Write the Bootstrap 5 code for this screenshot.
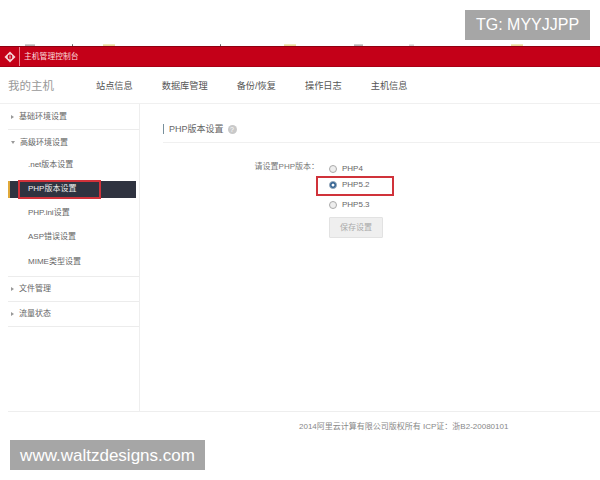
<!DOCTYPE html>
<html lang="zh-CN">
<head>
    <meta charset="UTF-8">
    <meta name="viewport" content="width=device-width, initial-scale=1.0">
    <title>主机管理控制台</title>
    <link href="https://cdn.jsdelivr.net/npm/bootstrap@5.3.0/dist/css/bootstrap.min.css" rel="stylesheet">
    <style>
        html, body { height: 480px; overflow: hidden; }
        body { position: relative; background: #fff; color: #666; font: 8px/1.2 "Liberation Sans", "Noto Sans CJK SC", sans-serif; }
        a { color: inherit; text-decoration: none; }
        .top-gap { height: 42px; }
        .crop-strip { height: 4px; background:
            linear-gradient(#ddd, #aaa) 25px 2px / 10px 2px no-repeat,
            linear-gradient(#999, #555) 72px 2px / 1px 2px no-repeat,
            linear-gradient(#f3eecb, #e8d68c) 103px 2px / 12px 2px no-repeat,
            linear-gradient(#999, #555) 220px 2px / 1px 2px no-repeat,
            linear-gradient(#f3eecb, #e8d68c) 284px 2px / 12px 2px no-repeat,
            linear-gradient(#ddd, #aaa) 354px 2px / 9px 2px no-repeat,
            linear-gradient(#eee, #ccc) 409px 2px / 5px 2px no-repeat,
            linear-gradient(#f3eecb, #e8d68c) 511px 2px / 12px 2px no-repeat;
        }
        .red-bar { height: 21px; background: #c40018; border-top: 1px solid #8f0012; border-bottom: 1px solid #a80016; color: #fbdcdc; }
        .red-logo { width: 20px; border-right: 1px solid #e8808c; }
        .red-title { margin-left: 4px; font-size: 7.8px; }
        .top-nav { height: 37px; padding: 3px 0 0 8px; border-bottom: 1px solid #f0f0f0; }
        .host-title { width: 88px; font-size: 11.5px; color: #999; }
        .nav-gap { gap: 29px; color: #555; }
        .nav-gap a { font-size: 9.2px; }
        .side-col { width: 131px; margin-left: 8px; height: 307px; }
        .main-col { border-left: 1px solid #eee; height: 307px; padding-left: 23px; }
        .side-head { height: 25px; padding-left: 3px; gap: 5px; border-bottom: 1px solid #ececec; }
        .side-head.first { height: 26px; }
        .side-head.open { height: 23px; padding-top: 2px; border-bottom: 0; }
        .arrow-r { width: 0; height: 0; border-left: 3px solid #999; border-top: 2.5px solid transparent; border-bottom: 2.5px solid transparent; }
        .arrow-d { width: 0; height: 0; border-top: 3px solid #999; border-left: 2.5px solid transparent; border-right: 2.5px solid transparent; }
        .side-sub { height: 24.5px; padding-left: 20px; }
        .side-sub.active { height: 17px; margin: 3px 3px 3px 0; background: #2f3340; color: #eee; border-left: 2px solid #e0a93a; padding-left: 18px; position: relative; }
        .side-group { border-bottom: 1px solid #ececec; padding-bottom: 2px; }
        .red-box { position: absolute; border: 2px solid #d0323a; pointer-events: none; }
        .side-mark { left: 8px; top: -1px; width: 83px; height: 19px; }
        .page-head { height: 39px; padding-top: 12px; border-bottom: 1px solid #f0f0f0; font-size: 9px; color: #666; gap: 4px; }
        .head-bar { width: 1px; height: 10px; background: #78909c; margin-right: 1px; }
        .help-dot { width: 9px; height: 9px; border-radius: 50%; background: #c9c9c9; color: #fff; font-size: 7px; line-height: 9px; text-align: center; }
        .form-area { padding-top: 18px; position: relative; }
        .php-label { width: 156px; text-align: right; padding-top: 1px; color: #777; }
        .radio-col { margin-left: 10px; color: #666; }
        .radio-row { gap: 5px; height: 16px; }
        .radio-row.late { margin-top: 4px; }
        .radio-row .form-check-input { width: 8px; height: 8px; margin: 0; border-color: #aaa; background-color: #eee; }
        .radio-row .form-check-input:checked { background-color: #2a5d8f; border-color: #9ab; }
        .radio-mark { left: 153px; top: 33px; width: 78px; height: 20px; }
        .save-btn { width: 54px; height: 21px; margin-top: 4px; padding: 0; font-size: 8px; line-height: 1; background: #efefef; border: 1px solid #e2e2e2; color: #aaa; border-radius: 1px; }
        .foot-line { margin-left: 8px; border-top: 1px solid #eee; height: 30px; padding-left: 291px; color: #888; }
        .stamp { position: absolute; background: #a6a6a6; color: #fff; font-family: "Liberation Sans", sans-serif; font-size: 16px; line-height: 1; }
        .stamp-tg { left: 465px; top: 10px; width: 125px; height: 30px; }
        .stamp-site { left: 10px; top: 440px; width: 195px; height: 30px; font-size: 17px; }
    </style>
</head>
<body>
    <div class="top-gap"></div>
    <div class="crop-strip"></div>

    <div class="red-bar d-flex align-items-stretch">
        <div class="red-logo d-flex align-items-center justify-content-center">
            <svg width="12" height="12" viewBox="0 0 12 12">
                <path d="M6 .5 11.5 6 6 11.5.5 6Z" fill="#f6d5d8"/>
                <circle cx="6" cy="6" r="2.4" fill="#c40018"/>
                <path d="M5.5 4.5h1v3h-1z" fill="#f6d5d8"/>
            </svg>
        </div>
        <div class="red-title d-flex align-items-center">主机管理控制台</div>
    </div>

    <div class="top-nav d-flex align-items-center">
        <div class="host-title">我的主机</div>
        <nav class="nav-gap d-flex">
            <a href="#">站点信息</a>
            <a href="#">数据库管理</a>
            <a href="#">备份/恢复</a>
            <a href="#">操作日志</a>
            <a href="#">主机信息</a>
        </nav>
    </div>

    <div class="d-flex">
        <aside class="side-col">
            <div class="side-head first d-flex align-items-center"><span class="arrow-r"></span>基础环境设置</div>
            <div class="side-group">
                <div class="side-head open d-flex align-items-center"><span class="arrow-d"></span>高级环境设置</div>
                <div class="side-sub d-flex align-items-center">.net版本设置</div>
                <div class="side-sub active d-flex align-items-center">PHP版本设置<span class="red-box side-mark"></span></div>
                <div class="side-sub d-flex align-items-center">PHP.ini设置</div>
                <div class="side-sub d-flex align-items-center">ASP错误设置</div>
                <div class="side-sub d-flex align-items-center">MIME类型设置</div>
            </div>
            <div class="side-head d-flex align-items-center"><span class="arrow-r"></span>文件管理</div>
            <div class="side-head d-flex align-items-center"><span class="arrow-r"></span>流量状态</div>
        </aside>

        <main class="main-col flex-grow-1">
            <div class="page-head d-flex align-items-center">
                <span class="head-bar"></span>PHP版本设置<span class="help-dot">?</span>
            </div>
            <div class="form-area">
                <div class="d-flex">
                    <div class="php-label">请设置PHP版本：</div>
                    <div class="radio-col">
                        <label class="radio-row d-flex align-items-center"><input class="form-check-input" type="radio" name="php">PHP4</label>
                        <label class="radio-row d-flex align-items-center"><input class="form-check-input" type="radio" name="php" checked>PHP5.2</label>
                        <label class="radio-row late d-flex align-items-center"><input class="form-check-input" type="radio" name="php">PHP5.3</label>
                        <button type="button" class="btn save-btn d-block">保存设置</button>
                    </div>
                </div>
                <span class="red-box radio-mark"></span>
            </div>
        </main>
    </div>

    <footer class="foot-line d-flex align-items-center">2014阿里云计算有限公司版权所有 ICP证：浙B2-20080101</footer>

    <div class="stamp stamp-tg d-flex align-items-center justify-content-center">TG: MYYJJPP</div>
    <div class="stamp stamp-site d-flex align-items-center justify-content-center">www.waltzdesigns.com</div>

    <script src="https://cdn.jsdelivr.net/npm/bootstrap@5.3.0/dist/js/bootstrap.bundle.min.js"></script>
</body>
</html>
